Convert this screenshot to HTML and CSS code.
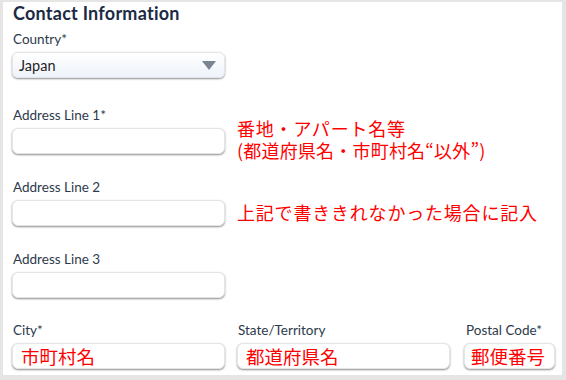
FILE: index.html
```html
<!DOCTYPE html>
<html lang="ja">
<head>
<meta charset="utf-8">
<link rel="stylesheet" href="styles.css">
</head>
<body>
<div class="frame">
  <h1 class="title">Contact Information</h1>
  <div class="field first">
    <div class="label">Country*</div>
    <div class="row">
      <div class="select box"><span>Japan</span><svg class="caret" width="14" height="9" viewBox="0 0 14 9"><path d="M0 0 H14 L7 9 Z" fill="#7b8592"/></svg></div>
    </div>
  </div>
  <div class="field">
    <div class="label">Address Line 1*</div>
    <div class="row">
      <div class="box"></div>
      <div class="note two"><div class="line">番地・アパート名等</div><div class="line tight">(都道府県名・市町村名“以外”)</div></div>
    </div>
  </div>
  <div class="field">
    <div class="label">Address Line 2</div>
    <div class="row">
      <div class="box"></div>
      <div class="note one">上記で書ききれなかった場合に記入</div>
    </div>
  </div>
  <div class="field">
    <div class="label">Address Line 3</div>
    <div class="row">
      <div class="box"></div>
    </div>
  </div>
  <div class="grid">
    <div class="label">City*</div>
    <div class="label">State/Territory</div>
    <div class="label postal">Postal Code*</div>
    <div class="box red">市町村名</div>
    <div class="box red">都道府県名</div>
    <div class="box red postal-box">郵便番号</div>
  </div>
</div>
</body>
</html>
```
FILE: styles.css
```css
html, body {
  margin: 0;
  padding: 0;
  background: #e5e5e5;
}
body {
  width: 566px;
  height: 380px;
  overflow: hidden;
  font-family: "Lato", "Open Sans", "Noto Sans CJK JP", sans-serif;
}
.frame {
  margin: 2px 0 0 3px;
  width: 559px;
  height: 373px;
  background: #fff;
  padding: 0 0 0 9px;
  box-sizing: border-box;
  overflow: hidden;
}
.title {
  margin: 0;
  padding-left: 1px;
  font-size: 18px;
  line-height: 22px;
  font-weight: 700;
  color: #1c2a45;
  letter-spacing: 0.25px;
}
.label {
  font-size: 13.5px;
  line-height: 16px;
  height: 16px;
  color: #2d3a4b;
  padding-left: 1px;
  white-space: nowrap;
}
.field {
  margin-top: 25px;
}
.field.first {
  margin-top: 7px;
}
.field.first + .field {
  margin-top: 29px;
}
.row {
  display: flex;
  align-items: flex-start;
  gap: 12px;
  margin-top: 5px;
  height: 26px;
}
.box {
  box-sizing: border-box;
  width: 213px;
  height: 26px;
  border: 1px solid #e3e5e9;
  border-radius: 6px;
  background: #fff;
  box-shadow: 0 1px 2px rgba(0, 0, 0, 0.45);
  flex: none;
}
.select {
  display: flex;
  align-items: center;
  justify-content: space-between;
  padding: 0 8px 0 6px;
  font-size: 14.5px;
  color: #1f1f1f;
  background: linear-gradient(#ffffff, #eef3fa);
}
.caret { display: block; }
.note {
  color: #ff0000;
  font-family: "Noto Sans CJK JP", sans-serif;
  font-size: 18px;
  letter-spacing: 0.8px;
  line-height: 22px;
  white-space: nowrap;
}
.note .line { height: 22px; }
.note .line.tight { letter-spacing: 0.2px; }
.note.two { margin-top: -11px; }
.note.one { margin-top: 1px; }
.grid {
  display: grid;
  grid-template-columns: 213px 215px 91px;
  column-gap: 12px;
  row-gap: 5px;
  margin-top: 24px;
}
.grid .label { height: 16px; }
.grid .postal { margin-left: 1px; }
.grid .box { width: 213px; }
.grid .postal-box { width: 91px; padding-left: 6px; }
.red {
  color: #ff0000;
  font-family: "Noto Sans CJK JP", sans-serif;
  font-size: 18.5px;
  line-height: 25px;
  padding-left: 8px;
  white-space: nowrap;
}
```
